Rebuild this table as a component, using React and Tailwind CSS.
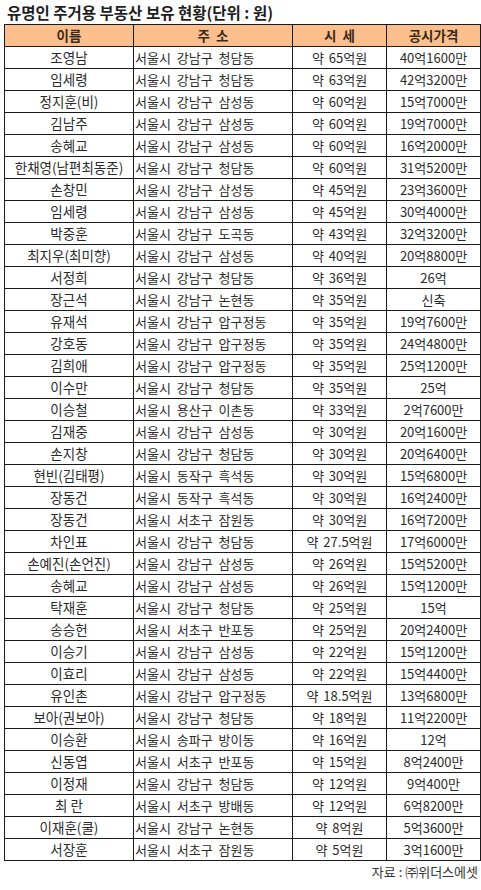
const rows = [
  ['조영남', '서울시 강남구 청담동', '약 65억원', '40억1600만'],
  ['임세령', '서울시 강남구 청담동', '약 63억원', '42억3200만'],
  ['정지훈(비)', '서울시 강남구 삼성동', '약 60억원', '15억7000만'],
  ['김남주', '서울시 강남구 삼성동', '약 60억원', '19억7000만'],
  ['송혜교', '서울시 강남구 삼성동', '약 60억원', '16억2000만'],
  ['한채영(남편최동준)', '서울시 강남구 청담동', '약 60억원', '31억5200만'],
  ['손창민', '서울시 강남구 삼성동', '약 45억원', '23억3600만'],
  ['임세령', '서울시 강남구 삼성동', '약 45억원', '30억4000만'],
  ['박중훈', '서울시 강남구 도곡동', '약 43억원', '32억3200만'],
  ['최지우(최미향)', '서울시 강남구 삼성동', '약 40억원', '20억8800만'],
  ['서정희', '서울시 강남구 청담동', '약 36억원', '26억'],
  ['장근석', '서울시 강남구 논현동', '약 35억원', '신축'],
  ['유재석', '서울시 강남구 압구정동', '약 35억원', '19억7600만'],
  ['강호동', '서울시 강남구 압구정동', '약 35억원', '24억4800만'],
  ['김희애', '서울시 강남구 압구정동', '약 35억원', '25억1200만'],
  ['이수만', '서울시 강남구 청담동', '약 35억원', '25억'],
  ['이승철', '서울시 용산구 이촌동', '약 33억원', '2억7600만'],
  ['김재중', '서울시 강남구 삼성동', '약 30억원', '20억1600만'],
  ['손지창', '서울시 강남구 청담동', '약 30억원', '20억6400만'],
  ['현빈(김태평)', '서울시 동작구 흑석동', '약 30억원', '15억6800만'],
  ['장동건', '서울시 동작구 흑석동', '약 30억원', '16억2400만'],
  ['장동건', '서울시 서초구 잠원동', '약 30억원', '16억7200만'],
  ['차인표', '서울시 강남구 청담동', '약 27.5억원', '17억6000만'],
  ['손예진(손언진)', '서울시 강남구 삼성동', '약 26억원', '15억5200만'],
  ['송혜교', '서울시 강남구 삼성동', '약 26억원', '15억1200만'],
  ['탁재훈', '서울시 강남구 청담동', '약 25억원', '15억'],
  ['송승헌', '서울시 서초구 반포동', '약 25억원', '20억2400만'],
  ['이승기', '서울시 강남구 삼성동', '약 22억원', '15억1200만'],
  ['이효리', '서울시 강남구 삼성동', '약 22억원', '15억4400만'],
  ['유인촌', '서울시 강남구 압구정동', '약 18.5억원', '13억6800만'],
  ['보아(권보아)', '서울시 강남구 청담동', '약 18억원', '11억2200만'],
  ['이승환', '서울시 송파구 방이동', '약 16억원', '12억'],
  ['신동엽', '서울시 서초구 반포동', '약 15억원', '8억2400만'],
  ['이정재', '서울시 강남구 청담동', '약 12억원', '9억400만'],
  ['최 란', '서울시 서초구 방배동', '약 12억원', '6억8200만'],
  ['이재훈(쿨)', '서울시 강남구 논현동', '약 8억원', '5억3600만'],
  ['서장훈', '서울시 서초구 잠원동', '약 5억원', '3억1600만'],
];

const cols = 'grid grid-cols-[129px_159px_94px_94px]';
const cell = 'h-[22px] border-r border-b border-[#1a1a1a] flex items-center whitespace-nowrap';

export default function App() {
  return (
    <div className="w-[481px] h-[890px] bg-white text-[#2b2b2b] font-['Noto_Sans_CJK_KR','Noto_Sans',sans-serif]">
      <h1 className="pl-[7px] pt-[2px] h-[24px] text-[15.5px] leading-[20px] font-bold text-[#1e1e1e]">
        유명인 주거용 부동산 보유 현황(단위 : 원)
      </h1>
      <div className="ml-[4px] w-[477px] border-l border-t border-[#1a1a1a]">
        <div className={`${cols} bg-[#fbbf8e] text-[#3b2a1c] font-bold text-[13.5px]`}>
          <div className={`${cell} justify-center`}>이름</div>
          <div className={`${cell} justify-center [word-spacing:3px]`}>주 소</div>
          <div className={`${cell} justify-center [word-spacing:3px]`}>시 세</div>
          <div className={`${cell} justify-center`}>공시가격</div>
        </div>
        {rows.map((r, i) => (
          <div key={i} className={`${cols} text-[13px]`}>
            <div className={`${cell} justify-center text-[13.5px]`}>{r[0]}</div>
            <div className={`${cell} pl-[1px] [word-spacing:3px]`}>{r[1]}</div>
            <div className={`${cell} justify-center [word-spacing:2px]`}>{r[2]}</div>
            <div className={`${cell} justify-center`}>{r[3]}</div>
          </div>
        ))}
      </div>
      <p className="mt-[2px] pr-[3px] text-right text-[13px] leading-[17px] text-[#333]">
        자료 : ㈜위더스에셋
      </p>
    </div>
  );
}
